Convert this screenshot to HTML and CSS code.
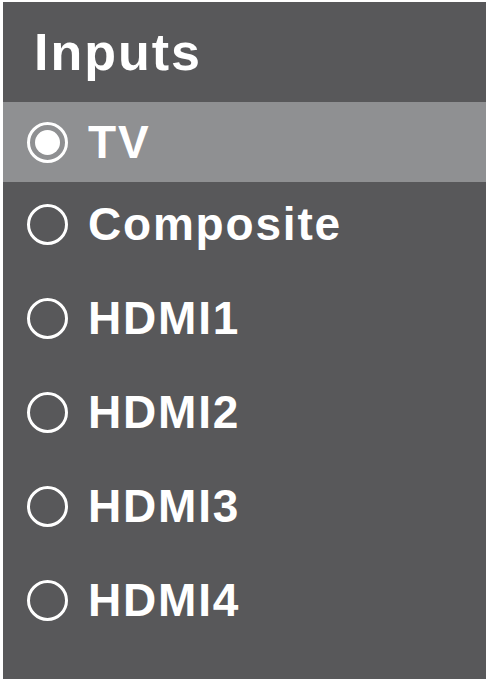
FILE: index.html
```html
<!DOCTYPE html>
<html>
<head>
<meta charset="utf-8">
<link rel="stylesheet" href="styles.css">
</head>
<body>
<div class="panel">
  <div class="header">Inputs</div>
  <ul class="list">
    <li class="item selected"><span class="radio"><span class="dot"></span></span><span class="label">TV</span></li>
    <li class="item"><span class="radio"></span><span class="label">Composite</span></li>
    <li class="item"><span class="radio"></span><span class="label">HDMI1</span></li>
    <li class="item"><span class="radio"></span><span class="label">HDMI2</span></li>
    <li class="item"><span class="radio"></span><span class="label">HDMI3</span></li>
    <li class="item"><span class="radio"></span><span class="label">HDMI4</span></li>
  </ul>
</div>
</body>
</html>
```

FILE: styles.css
```css
html, body {
  margin: 0;
  padding: 0;
  background: #ffffff;
}
body {
  padding: 2px 2px 2px 3px;
  font-family: "Liberation Sans", Arial, sans-serif;
  font-weight: bold;
  color: #ffffff;
}
.panel {
  width: 483px;
  height: 677px;
  background: #58585a;
  display: flex;
  flex-direction: column;
}
.header {
  height: 100px;
  box-sizing: border-box;
  padding: 24px 0 0 31px;
  font-size: 52px;
  line-height: 52px;
  letter-spacing: 2px;
}
.list {
  list-style: none;
  margin: 0;
  padding: 0;
  display: flex;
  flex-direction: column;
}
.item {
  height: 94px;
  box-sizing: border-box;
  padding: 21px 0 31px 24px;
  display: flex;
  align-items: center;
  gap: 20px;
}
.item.selected {
  height: 80px;
  padding: 0 0 0 24px;
  background: #8f9092;
}
.radio {
  width: 41px;
  height: 41px;
  box-sizing: border-box;
  border: 3.5px solid #ffffff;
  border-radius: 50%;
  display: flex;
  align-items: center;
  justify-content: center;
  flex: none;
}
.dot {
  width: 25px;
  height: 25px;
  border-radius: 50%;
  background: #ffffff;
}
.label {
  font-size: 46px;
  line-height: 42px;
  letter-spacing: 1.8px;
}
```
